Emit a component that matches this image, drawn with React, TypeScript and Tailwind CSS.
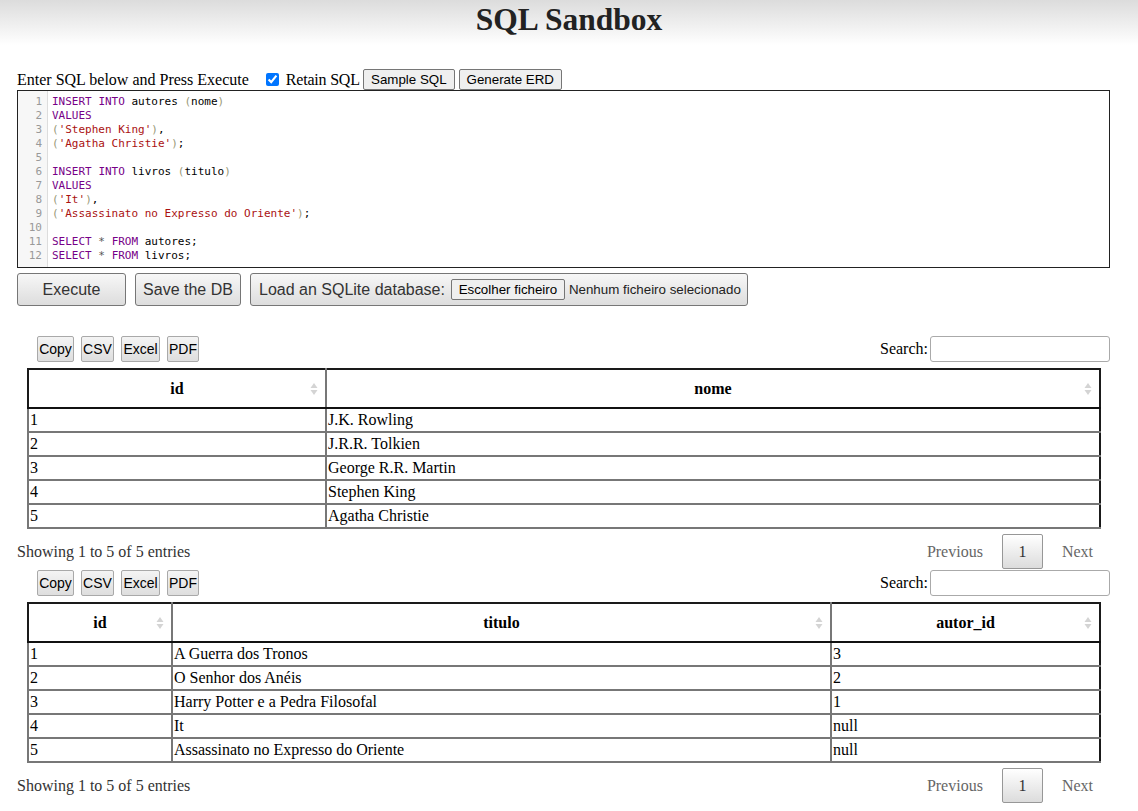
import React from 'react';

type Tok = [string, string];

const KW = 'text-[#770088]';
const STR = 'text-[#aa1111]';
const BR = 'text-[#999977]';
const TX = 'text-black';
const OP = 'text-[#555]';

const code: Tok[][] = [
  [[KW, 'INSERT'], [TX, ' '], [KW, 'INTO'], [TX, ' autores '], [BR, '('], [TX, 'nome'], [BR, ')']],
  [[KW, 'VALUES']],
  [[BR, '('], [STR, "'Stephen King'"], [BR, ')'], [TX, ',']],
  [[BR, '('], [STR, "'Agatha Christie'"], [BR, ')'], [TX, ';']],
  [],
  [[KW, 'INSERT'], [TX, ' '], [KW, 'INTO'], [TX, ' livros '], [BR, '('], [TX, 'titulo'], [BR, ')']],
  [[KW, 'VALUES']],
  [[BR, '('], [STR, "'It'"], [BR, ')'], [TX, ',']],
  [[BR, '('], [STR, "'Assassinato no Expresso do Oriente'"], [BR, ')'], [TX, ';']],
  [],
  [[KW, 'SELECT'], [OP, ' * '], [KW, 'FROM'], [TX, ' autores;']],
  [[KW, 'SELECT'], [OP, ' * '], [KW, 'FROM'], [TX, ' livros;']],
];

const serif = "font-['Liberation_Serif',serif]";
const sans = "font-['Liberation_Sans',Arial,sans-serif]";

function SortIcon() {
  return (
    <svg width="8" height="14" viewBox="0 0 8 14" className="absolute right-[7px] top-1/2 -translate-y-1/2">
      <path d="M4 1 L7.5 6 L0.5 6 Z" fill="#d4d4d4" />
      <path d="M4 13 L7.5 8 L0.5 8 Z" fill="#d4d4d4" />
    </svg>
  );
}

function SmallBtn({ label, w }: { label: string; w: string }) {
  return (
    <button
      className={`${sans} ${w} h-[26px] rounded-[2px] border border-[#a9a9a9] bg-gradient-to-b from-[#f4f4f4] to-[#dedede] px-0 text-center text-[14px] leading-none text-black`}
    >
      {label}
    </button>
  );
}

function DataSection({ cols, widths, rows }: { cols: string[]; widths: string[]; rows: string[][] }) {
  return (
    <div className="w-[1093px]">
      <div className="flex items-center justify-between pl-[20px]">
        <div className="flex gap-[7px]">
          <SmallBtn label="Copy" w="w-[37px]" />
          <SmallBtn label="CSV" w="w-[33px]" />
          <SmallBtn label="Excel" w="w-[39px]" />
          <SmallBtn label="PDF" w="w-[32px]" />
        </div>
        <div className={`${serif} flex items-center gap-[2px] text-[16px]`}>
          <span>Search:</span>
          <div className="h-[26px] w-[180px] rounded-[3px] border border-[#aaaaaa] bg-white" />
        </div>
      </div>
      <table className={`${serif} mx-[10px] mt-[6px] w-[1074px] table-fixed border-collapse border-2 border-[#1a1a1a] text-[16px]`}>
        <colgroup>
          {widths.map((w, i) => (
            <col key={i} className={w} />
          ))}
        </colgroup>
        <thead>
          <tr>
            {cols.map((c) => (
              <th
                key={c}
                className="relative h-[39px] border-b-2 border-r-2 border-b-[#111] border-r-[#777] p-0 text-center font-bold last:border-r-[#1a1a1a]"
              >
                {c}
                <SortIcon />
              </th>
            ))}
          </tr>
        </thead>
        <tbody>
          {rows.map((r, i) => (
            <tr key={i}>
              {r.map((v, j) => (
                <td key={j} className="h-[24px] border-2 border-[#777] px-[1px] py-0 leading-[20px] last:border-r-[#1a1a1a]">
                  {v}
                </td>
              ))}
            </tr>
          ))}
        </tbody>
      </table>
      <div className={`${serif} mt-[5px] flex items-center justify-between pr-[17px] text-[16px]`}>
        <span className="text-[#333]">Showing 1 to 5 of 5 entries</span>
        <div className="flex items-center gap-[19px] text-[#666]">
          <span>Previous</span>
          <span className="flex h-[35px] w-[41px] items-center justify-center rounded-[2px] border border-[#979797] bg-gradient-to-b from-white to-[#dcdcdc] text-[#333]">
            1
          </span>
          <span>Next</span>
        </div>
      </div>
    </div>
  );
}

export default function App() {
  return (
    <div className={`${serif} min-h-[811px] bg-white text-black`}>
      <div className="h-[45px] bg-gradient-to-b from-[#dcdcdc] to-white">
        <h1 className="pt-[2px] text-center text-[31.5px] font-bold leading-[36px] text-[#222]">SQL Sandbox</h1>
      </div>

      <div className="px-[17px] pt-[24px]">
        <div className="flex h-[21px] items-center text-[16px]">
          <span>Enter SQL below and Press Execute</span>
          <input type="checkbox" defaultChecked className="ml-[17px] mr-[7px] h-[13px] w-[13px] accent-[#0075ff]" />
          <span className="tracking-[-0.2px]">Retain SQL</span>
          <button className={`${sans} ml-[3px] h-[21px] w-[92px] rounded-[2px] border border-[#767676] bg-[#efefef] text-[13.33px]`}>
            Sample SQL
          </button>
          <button className={`${sans} ml-[4px] h-[21px] w-[103px] rounded-[2px] border border-[#767676] bg-[#efefef] text-[13.33px]`}>
            Generate ERD
          </button>
        </div>

        <div className="flex h-[178px] w-[1093px] border border-[#222] bg-white">
          <div className="w-[30px] border-r border-[#dddddd] bg-[#f7f7f7] py-[4px] pr-[5px] text-right font-['DejaVu_Sans_Mono',monospace] text-[11px] leading-[14px] text-[#999]">
            {code.map((_, i) => (
              <div key={i}>{i + 1}</div>
            ))}
          </div>
          <div className="py-[4px] pl-[4px] font-['DejaVu_Sans_Mono',monospace] text-[11px] leading-[14px] whitespace-pre">
            {code.map((line, i) => (
              <div key={i} className="h-[14px]">
                {line.map(([c, t], j) => (
                  <span key={j} className={c}>
                    {t}
                  </span>
                ))}
              </div>
            ))}
          </div>
        </div>

        <div className={`${sans} mt-[5px] flex gap-[9px] text-[16px] text-[#333]`}>
          <button className="h-[33px] w-[109px] rounded-[3px] border border-[#767676] bg-gradient-to-b from-[#f7f7f7] to-[#dddddd]">
            Execute
          </button>
          <button className="h-[33px] w-[106px] rounded-[3px] border border-[#767676] bg-gradient-to-b from-[#f7f7f7] to-[#dddddd]">
            Save the DB
          </button>
          <div className="flex h-[33px] w-[498px] items-center rounded-[3px] border border-[#767676] bg-gradient-to-b from-[#f7f7f7] to-[#dddddd] pl-[8px]">
            <span>Load an SQLite database:</span>
            <span className="ml-[6px] flex h-[21px] w-[114px] items-center justify-center rounded-[2px] border border-[#767676] bg-[#efefef] text-[13.33px] text-black">
              Escolher ficheiro
            </span>
            <span className="ml-[4px] text-[13.33px] text-[#222]">Nenhum ficheiro selecionado</span>
          </div>
        </div>

        <div className="mt-[30px]">
          <DataSection
            cols={['id', 'nome']}
            widths={['w-[298px]', 'w-auto']}
            rows={[
              ['1', 'J.K. Rowling'],
              ['2', 'J.R.R. Tolkien'],
              ['3', 'George R.R. Martin'],
              ['4', 'Stephen King'],
              ['5', 'Agatha Christie'],
            ]}
          />
        </div>
        <div className="mt-[1px]">
          <DataSection
            cols={['id', 'titulo', 'autor_id']}
            widths={['w-[144px]', 'w-[659px]', 'w-auto']}
            rows={[
              ['1', 'A Guerra dos Tronos', '3'],
              ['2', 'O Senhor dos Anéis', '2'],
              ['3', 'Harry Potter e a Pedra Filosofal', '1'],
              ['4', 'It', 'null'],
              ['5', 'Assassinato no Expresso do Oriente', 'null'],
            ]}
          />
        </div>
      </div>
    </div>
  );
}
